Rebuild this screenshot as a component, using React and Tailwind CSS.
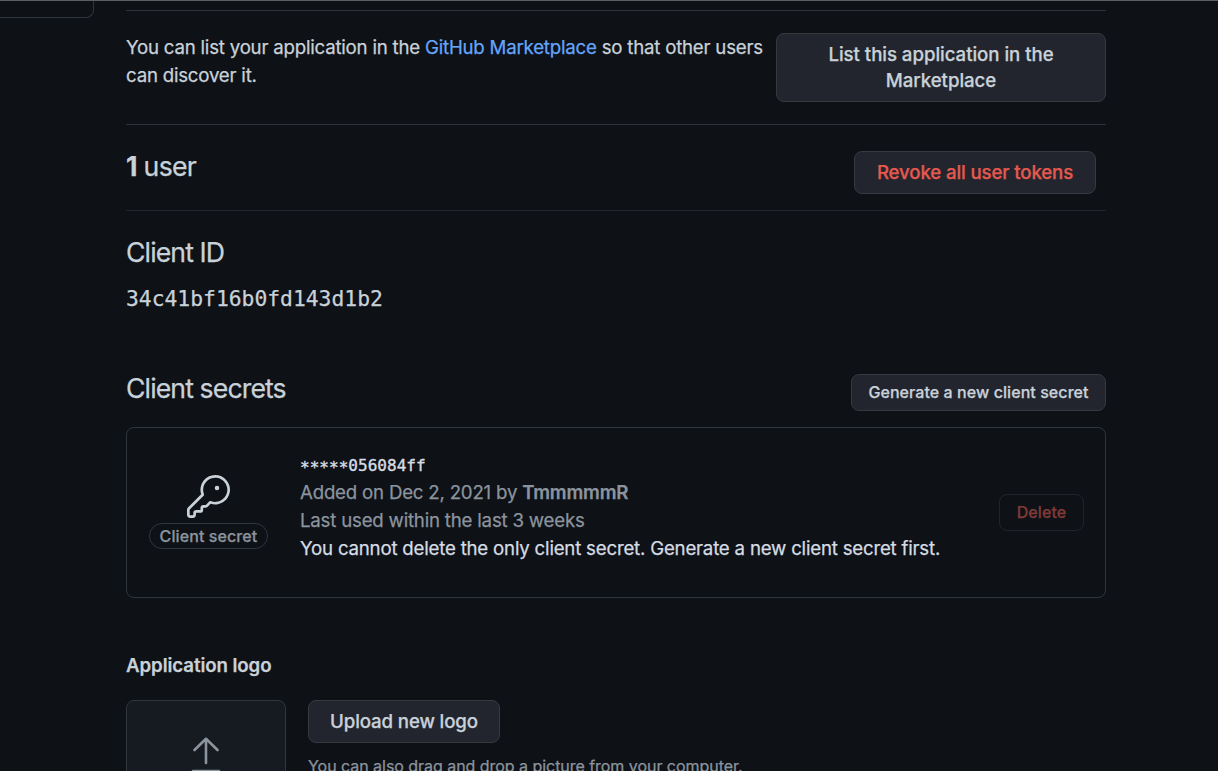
const button =
  "flex items-center justify-center rounded-lg border border-[#363940] bg-[#22252d] text-center font-medium text-[#c9d1d9] whitespace-nowrap";

function KeyIcon() {
  return (
    <svg className="h-[43px] w-[43px]" viewBox="0 0 24 24" fill="currentColor">
      <path d="M16.75 8.5a1.25 1.25 0 100-2.5 1.25 1.25 0 000 2.5z" />
      <path
        fillRule="evenodd"
        d="M15.75 0a8.25 8.25 0 00-7.851 10.79L.513 18.178A1.75 1.75 0 000 19.414v2.836C0 23.217.784 24 1.75 24h1.5A1.75 1.75 0 005 22.25v-1a.25.25 0 01.25-.25h2.735a.75.75 0 00.545-.22l.214-.213A.875.875 0 009 19.948V18.5a.25.25 0 01.25-.25h1.086c.464 0 .91-.184 1.237-.513l1.636-1.636A8.25 8.25 0 1015.75 0zM9 8.25a6.75 6.75 0 114.288 6.287.75.75 0 00-.804.168l-1.971 1.972a.25.25 0 01-.177.073H9.25A1.75 1.75 0 007.5 18.5v1H5.25a1.75 1.75 0 00-1.75 1.75v1a.25.25 0 01-.25.25h-1.5a.25.25 0 01-.25-.25v-2.836a.25.25 0 01.073-.177l7.722-7.721a.75.75 0 00.168-.804A6.73 6.73 0 019 8.25z"
      />
    </svg>
  );
}

function UploadIcon() {
  return (
    <svg
      className="h-[40px] w-[32px] shrink-0"
      viewBox="0 0 32 40"
      fill="none"
      stroke="currentColor"
      strokeWidth="2.6"
      strokeLinecap="round"
      strokeLinejoin="round"
    >
      <path d="M16 27V3M4.5 14 16 2.8 27.5 14M3 35H29" />
    </svg>
  );
}

export default function App() {
  return (
    <div className="flex h-[771px] w-[1218px] overflow-hidden border-t border-[#5c6063] bg-[#0e1116] font-['Inter',sans-serif] text-[18.67px] leading-7 text-[#c9d1d9] [-webkit-text-stroke:0.25px]">
      <aside className="h-[17px] w-[94px] shrink-0 rounded-br-lg border-r border-b border-[#30363d]" />

      <main className="ml-8 flex w-[980px] shrink-0 flex-col pt-[9px]">
        <section className="flex h-[114px] shrink-0 items-start justify-between border-t border-[#30343a] pt-[23px]">
          <p className="whitespace-nowrap tracking-[-0.215px]">
            You can list your application in the{" "}
            <a className="text-[#64a5fa]">GitHub Marketplace</a> so that other users
            <br />
            can discover it.
          </p>
          <div className={`${button} -mt-px h-[69px] w-[330px] leading-[26px] tracking-[-0.05px]`}>
            <span>
              List this application in the
              <br />
              Marketplace
            </span>
          </div>
        </section>

        <section className="flex h-[86px] shrink-0 items-start justify-between border-t border-[#30343a] pt-[25px] pr-[10px]">
          <h2 className="text-[26.67px] leading-8 tracking-[-0.7px]">
            <b className="font-bold">1</b> user
          </h2>
          <button className={`${button} mt-px h-[43px] w-[242px] tracking-[-0.13px] text-[#e5594f]!`}>
            Revoke all user tokens
          </button>
        </section>

        <section className="flex h-[164px] shrink-0 flex-col border-t border-[#22272d] pt-[21px]">
          <h2 className="text-[26.67px] leading-10 tracking-[-0.9px]">Client ID</h2>
          <code className="mt-[11px] font-['DejaVu_Sans_Mono',monospace] text-[21.33px] leading-8">
            34c41bf16b0fd143d1b2
          </code>
        </section>

        <header className="flex h-[37px] shrink-0 items-center justify-between">
          <h2 className="-mt-[9px] text-[26.67px] leading-10 tracking-[-0.9px]">Client secrets</h2>
          <button className={`${button} h-[37px] w-[255px] pb-[2px] text-[16px] tracking-[0.07px]`}>
            Generate a new client secret
          </button>
        </header>

        <section className="mt-4 flex h-[171px] shrink-0 items-start rounded-lg border border-[#30363d] pr-[21px] pl-[22px]">
          <div className="flex w-[119px] flex-col items-center pt-[47px]">
            <KeyIcon />
            <span className="mt-[5px] flex h-[26px] w-[119px] items-center justify-center rounded-full border border-[#30363d] text-[16px] font-medium tracking-[0.1px] whitespace-nowrap text-[#8b949e]">
              Client secret
            </span>
          </div>
          <div className="ml-8 flex flex-1 flex-col pt-6 tracking-[-0.205px] whitespace-nowrap">
            <code className="h-[27px] font-['DejaVu_Sans_Mono',monospace] text-[16px] leading-7 tracking-[0.03px] text-[#d5dce3] [-webkit-text-stroke:0.4px]">
              <span className="relative top-[2px]">*****</span>056084ff
            </code>
            <p className="text-[#8b949e]">
              Added on Dec 2, 2021 by <b className="font-semibold">TmmmmmR</b>
            </p>
            <p className="text-[#8b949e]">Last used within the last 3 weeks</p>
            <p className="text-[#d5dce3]">
              You cannot delete the only client secret. Generate a new client secret first.
            </p>
          </div>
          <button className="mt-[66px] h-[37px] w-[85px] rounded-lg border border-[#21252b] pb-[2px] text-[16px] font-medium tracking-[0.1px] text-[#813a38]">
            Delete
          </button>
        </section>

        <h3 className="mt-[54px] shrink-0 font-semibold tracking-[-0.07px]">Application logo</h3>
        <section className="mt-[20px] flex h-[160px] shrink-0 items-start">
          <div className="flex h-[160px] w-[160px] justify-center rounded-lg border border-[#30363d] bg-[#161b22] pt-[35px] text-[#8b949e]">
            <UploadIcon />
          </div>
          <div className="ml-[22px] flex flex-col">
            <button className={`${button} h-[43px] w-[192px] tracking-[-0.13px]`}>Upload new logo</button>
            <p className="mt-[11px] text-[16px] leading-6 tracking-[-0.04px] whitespace-nowrap text-[#8b949e]">
              You can also drag and drop a picture from your computer.
            </p>
          </div>
        </section>
      </main>
    </div>
  );
}
